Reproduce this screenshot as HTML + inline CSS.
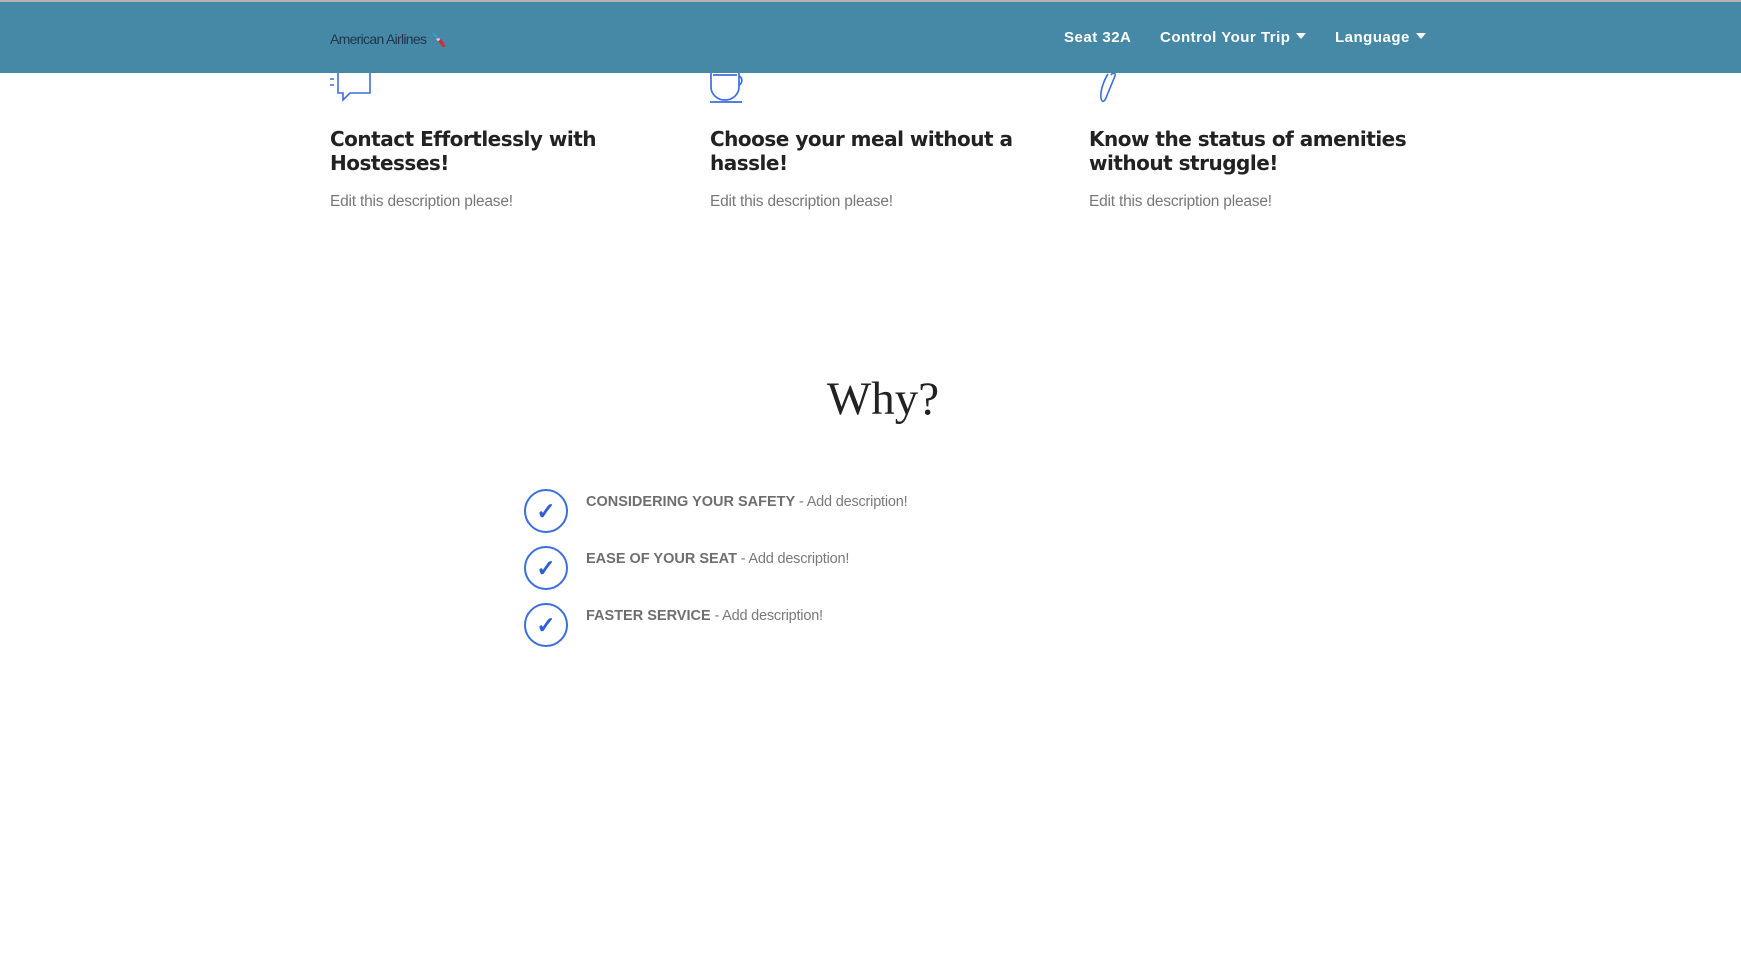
<!DOCTYPE html>
<html><head><meta charset="utf-8"><style>
*{margin:0;padding:0;box-sizing:border-box}
body{width:1741px;height:979px;background:#fff;position:relative;overflow:hidden;font-family:"Liberation Sans",sans-serif}
.topline{position:absolute;left:0;top:0;width:1741px;height:2px;background:#b4b4b4}
.hdr{position:absolute;left:0;top:2px;width:1741px;height:71px;background:#4589a7}
.logo{position:absolute;left:330px;top:28px;font-size:14px;color:#253447;letter-spacing:-0.7px}
.nav{position:absolute;top:27px;color:#fff;font-weight:bold;font-size:15px;letter-spacing:0.5px}
.car{display:inline-block;width:0;height:0;border-left:5px solid transparent;border-right:5px solid transparent;border-top:6px solid #fff;margin-left:6px;vertical-align:3px}
h3{position:absolute;top:127px;font-family:"DejaVu Sans","Liberation Sans",sans-serif;font-weight:bold;font-size:20px;line-height:24px;color:#222;letter-spacing:-0.5px;width:340px}
.d{position:absolute;top:193px;font-size:15.5px;color:#777;letter-spacing:-0.2px}
.why{position:absolute;left:0;width:1766px;text-align:center;top:372px;font-family:"Liberation Serif",serif;font-size:47px;color:#222}
.ck{position:absolute;left:524px;width:44px;height:44px;border:2.2px solid #3b6ee0;border-radius:50%;color:#2d5fd8;font-size:23px;font-weight:bold;text-align:center;line-height:40px}
.it{position:absolute;left:586px;font-size:14.5px;color:#7a7a7a;letter-spacing:-0.2px}
.it b{color:#6e6e6e;letter-spacing:0}
</style></head><body>
<div class="topline"></div>
<div class="hdr">
 <div class="logo">American Airlines <svg width="18" height="18" viewBox="0 0 16 16" style="vertical-align:-4px"><path d="M2 1 L8 6 L6 7 Z" fill="#3aa0d8"/><path d="M6 8 L9 7 L10 9 L8 10Z" fill="#ccc"/><path d="M8 10 L11 8 L15 15 L12 15Z" fill="#d22c3a"/></svg></div>
 <div class="nav" style="left:1064px">Seat 32A</div>
 <div class="nav" style="left:1160px">Control Your Trip<span class="car"></span></div>
 <div class="nav" style="left:1335px">Language<span class="car"></span></div>
</div>
<svg style="position:absolute;left:328px;top:73px" width="45" height="30" viewBox="0 0 45 30"><g fill="none" stroke="#3b6ee0" stroke-width="1.6"><path d="M10 0 V20 H15 V27 L22 20 H42 V0"/><path d="M2 6 H6 M2 12 H6"/></g></svg>
<svg style="position:absolute;left:709px;top:73px" width="45" height="32" viewBox="0 0 45 32"><g fill="none" stroke="#3b6ee0" stroke-width="1.7"><path d="M2 0 V14 A14 13 0 0 0 30 14 V0"/><path d="M4 2 H28"/><path d="M30 3 A5 5 0 0 1 30 12"/><path d="M1 29 H33"/></g></svg>
<svg style="position:absolute;left:1096px;top:73px" width="24" height="32" viewBox="0 0 24 32"><path d="M12 1 C8 7 4 18 5 25 C6 30 8 29 10 25 C13 17 17 8 19 3 C20 0 17 -1 15 2" fill="none" stroke="#3b6ee0" stroke-width="1.6"/></svg>
<h3 style="left:330px">Contact Effortlessly with Hostesses!</h3>
<h3 style="left:710px">Choose your meal without a hassle!</h3>
<h3 style="left:1089px;width:340px">Know the status of amenities without struggle!</h3>
<div class="d" style="left:330px">Edit this description please!</div>
<div class="d" style="left:710px">Edit this description please!</div>
<div class="d" style="left:1089px">Edit this description please!</div>
<div class="why">Why?</div>
<div class="ck" style="top:489px">✓</div>
<div class="ck" style="top:546px">✓</div>
<div class="ck" style="top:603px">✓</div>
<div class="it" style="top:494px"><b>CONSIDERING YOUR SAFETY</b> - Add description!</div>
<div class="it" style="top:551px"><b>EASE OF YOUR SEAT</b> - Add description!</div>
<div class="it" style="top:608px"><b>FASTER SERVICE</b> - Add description!</div>
</body></html>
